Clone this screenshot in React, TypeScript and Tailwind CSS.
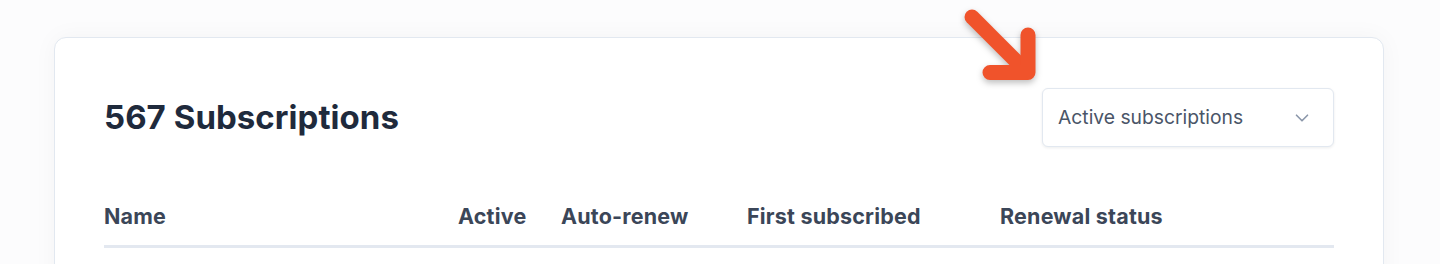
import { ChevronDown } from "lucide-react";

const columns = [
  { label: "Name", w: "w-[354px]" },
  { label: "Active", w: "w-[103px]" },
  { label: "Auto-renew", w: "w-[186px]" },
  { label: "First subscribed", w: "w-[253px]" },
  { label: "Renewal status", w: "flex-1" },
];

function Arrow() {
  return (
    <svg
      className="absolute left-[950px] top-0 drop-shadow-[0_3px_3px_rgba(0,0,0,0.25)]"
      width="100"
      height="95"
      viewBox="0 0 100 95"
      fill="none"
    >
      <g stroke="#f0532b" strokeWidth="15" strokeLinecap="round" strokeLinejoin="round">
        <path d="M22 17 L76 71" />
        <path d="M78 35 L78 72.5 L40 72.5" />
      </g>
    </svg>
  );
}

export default function App() {
  return (
    <div
      className="relative h-[264px] overflow-hidden bg-[#fcfcfd] pt-[37px] pl-[54px] pr-[56px]"
      style={{ fontFamily: "Inter, Lato, sans-serif" }}
    >
      <div className="h-[300px] rounded-xl border border-[#e2e8f0] bg-white px-[49px] pt-[50px] shadow-[0_0_24px_rgba(15,23,42,0.04)]">
        <div className="flex items-center justify-between">
          <h1 className="text-[33px] font-bold tracking-[0.05px] text-[#1f2a3c]">567 Subscriptions</h1>
          <button className="flex h-[59px] w-[292px] items-center justify-between rounded-md border border-[#e2e8f0] bg-white pl-[15px] pr-[20px] text-[19.3px] text-[#4a5568] shadow-[0_1px_3px_rgba(15,23,42,0.08)]">
            <span>Active subscriptions</span>
            <ChevronDown className="h-[22px] w-[22px] text-[#8b97aa]" strokeWidth={1.8} />
          </button>
        </div>
        <div className="mt-[55px] flex border-b-[3px] border-[#e3e8f0] pb-[15px] text-[21.5px] font-bold leading-[28px] tracking-[0.2px] text-[#3b4658]">
          {columns.map((c) => (
            <div key={c.label} className={c.w}>
              {c.label}
            </div>
          ))}
        </div>
      </div>
      <Arrow />
    </div>
  );
}
